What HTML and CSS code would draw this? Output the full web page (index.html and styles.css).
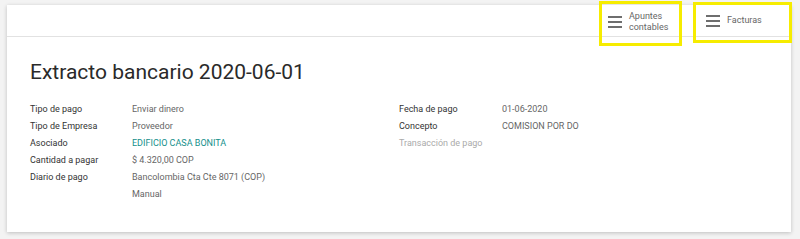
FILE: index.html
```html
<!DOCTYPE html>
<html lang="es">
<head>
<meta charset="utf-8">
<title>Extracto bancario</title>
<link rel="stylesheet" href="styles.css">
</head>
<body>
<div class="card">
  <div class="header">
    <div class="btn btn-apuntes">
      <span class="icon"><i></i><i></i><i></i></span>
      <span class="btn-text">Apuntes<br>contables</span>
    </div>
    <div class="btn btn-facturas">
      <span class="icon"><i></i><i></i><i></i></span>
      <span class="btn-text">Facturas</span>
    </div>
  </div>
  <div class="sheet">
    <h1 class="title">Extracto bancario 2020-06-01</h1>
    <div class="groups">
      <div class="group">
        <div class="label">Tipo de pago</div><div class="value">Enviar dinero</div>
        <div class="label">Tipo de Empresa</div><div class="value">Proveedor</div>
        <div class="label">Asociado</div><div class="value link">EDIFICIO CASA BONITA</div>
        <div class="label">Cantidad a pagar</div><div class="value">$ 4.320,00 COP</div>
        <div class="label">Diario de pago</div><div class="value">Bancolombia Cta Cte 8071 (COP)</div>
        <div class="label"></div><div class="value">Manual</div>
      </div>
      <div class="group group-right">
        <div class="label">Fecha de pago</div><div class="value">01-06-2020</div>
        <div class="label">Concepto</div><div class="value">COMISION POR DO</div>
        <div class="label muted">Transacción de pago</div><div class="value"></div>
      </div>
    </div>
  </div>
</div>
</body>
</html>
```

FILE: styles.css
```css
html, body {
  margin: 0;
  padding: 0;
}
body {
  background: #f3f3f3;
  font-family: Roboto, "Liberation Sans", sans-serif;
  width: 800px;
  height: 239px;
  overflow: hidden;
}
.card {
  margin: 5px 0 0 7px;
  width: 784px;
  height: 227px;
  background: #fff;
  box-shadow: 0 1px 4px rgba(0, 0, 0, 0.22);
}
.header {
  height: 31px;
  border-bottom: 1px solid #e2e2e2;
  display: flex;
  justify-content: flex-end;
  align-items: flex-start;
  gap: 8px;
  margin-right: -1px;
}
.btn {
  box-sizing: border-box;
  border: 3px solid #f6ec00;
  display: flex;
  align-items: center;
  gap: 7px;
  color: #666;
  font-size: 9px;
  line-height: 11px;
}
.btn-apuntes {
  width: 83px;
  height: 45px;
  margin-top: -4px;
  padding: 0 0 4px 6px;
  margin-right: 3px;
}
.btn-facturas {
  width: 99px;
  height: 41px;
  margin-top: -3px;
  padding: 0 0 4px 10px;
}
.icon {
  display: flex;
  flex-direction: column;
  gap: 3px;
  width: 14px;
}
.icon i {
  display: block;
  height: 2px;
  background: #6e6e6e;
}
.sheet {
  padding: 22px 23px 0 23px;
}
.title {
  margin: 0;
  font-size: 21px;
  font-weight: 400;
  line-height: 26px;
  color: #2a2a2a;
}
.groups {
  display: flex;
  margin-top: 16px;
}
.group {
  display: grid;
  grid-template-columns: 102px auto;
  grid-auto-rows: 17px;
  width: 370px;
  font-size: 9px;
  line-height: 17px;
}
.group-right {
  grid-template-columns: 103px auto;
}
.label {
  color: #333;
}
.label.muted {
  color: #aaa;
}
.value {
  color: #666;
}
.value.link {
  color: #138f8b;
}
```
